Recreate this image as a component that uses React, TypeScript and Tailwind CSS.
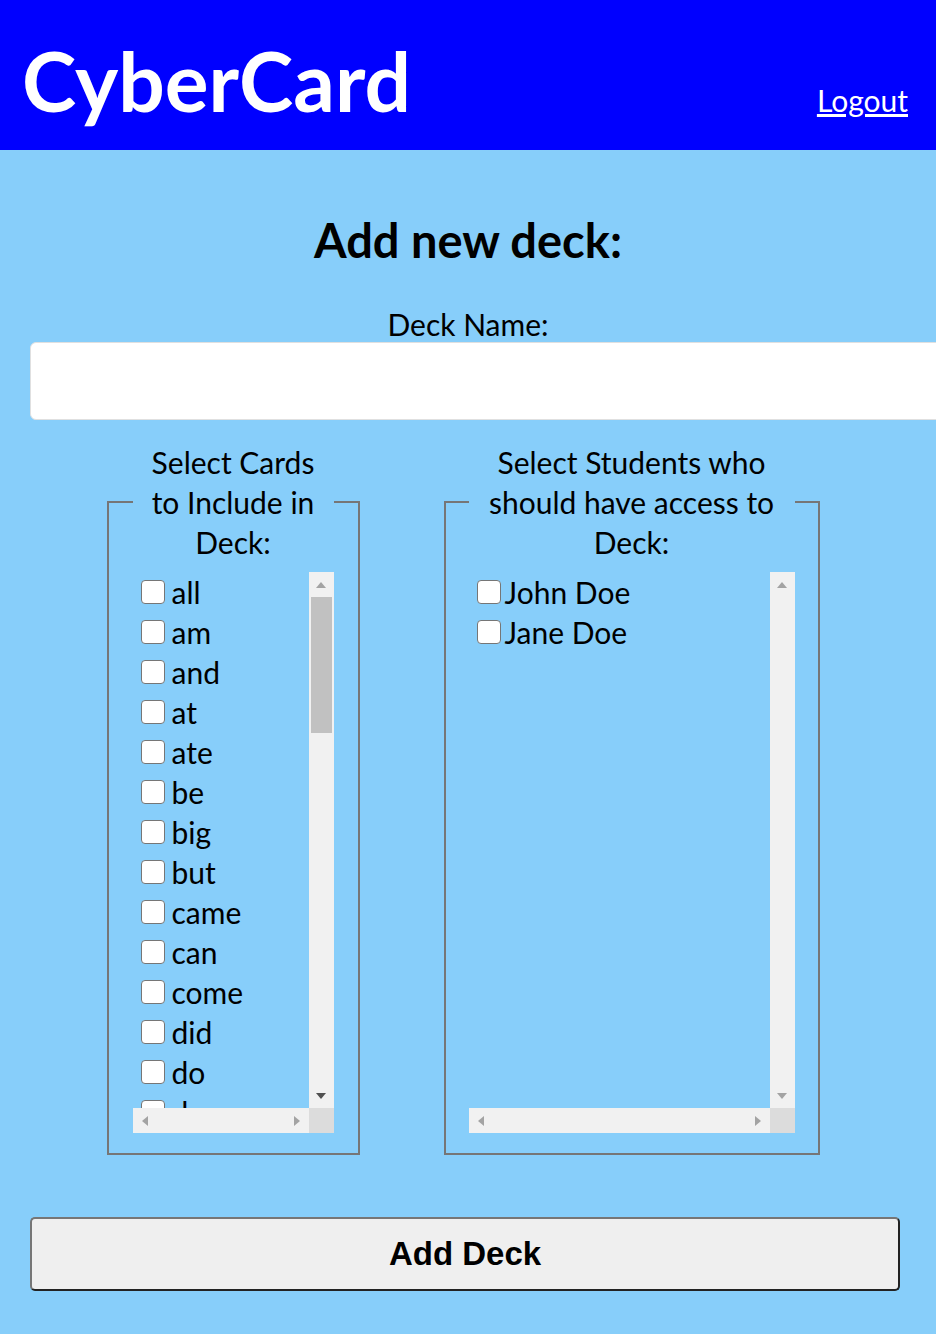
import React from "react";

const cards = [
  "all", "am", "and", "at", "ate", "be", "big", "but", "came", "can", "come", "did", "do", "down", "eat", "four", "get", "good",
];
const students = ["John Doe", "Jane Doe"];

const UpArrow = ({ color }: { color: string }) => (
  <svg width="10" height="6" viewBox="0 0 10 6">
    <polygon points="5,0 10,6 0,6" fill={color} />
  </svg>
);
const DownArrow = ({ color }: { color: string }) => (
  <svg width="10" height="6" viewBox="0 0 10 6">
    <polygon points="0,0 10,0 5,6" fill={color} />
  </svg>
);
const LeftArrow = () => (
  <svg width="6" height="10" viewBox="0 0 6 10">
    <polygon points="6,0 6,10 0,5" fill="#a3a3a3" />
  </svg>
);
const RightArrow = () => (
  <svg width="6" height="10" viewBox="0 0 6 10">
    <polygon points="0,0 6,5 0,10" fill="#a3a3a3" />
  </svg>
);

const CheckRow = ({ label, pad }: { label: string; pad: string }) => (
  <label className={`flex h-[40px] items-center ${pad}`}>
    <input
      type="checkbox"
      className="m-0 h-[24px] w-[24px] shrink-0 appearance-none rounded-[4px] border border-[#767676] bg-white"
    />
    <span className="whitespace-nowrap text-[30px] leading-[40px] text-black">{label}</span>
  </label>
);

const ScrollBox = ({
  items,
  scrollable,
  width,
  pad,
}: {
  items: string[];
  scrollable: boolean;
  width: string;
  pad: string;
}) => (
  <div className={`grid h-[561px] grid-cols-[1fr_25px] grid-rows-[1fr_25px] ${width}`}>
    <div className="overflow-hidden">
      {items.map((it) => (
        <CheckRow key={it} label={it} pad={pad} />
      ))}
    </div>
    <div className="flex flex-col bg-[#f1f1f1]">
      <div className="flex h-[25px] items-center justify-center">
        <UpArrow color="#a3a3a3" />
      </div>
      {scrollable && <div className="mx-[2px] h-[136px] bg-[#c1c1c1]" />}
      <div className="flex-1" />
      <div className="flex h-[25px] items-center justify-center">
        <DownArrow color={scrollable ? "#505050" : "#a3a3a3"} />
      </div>
    </div>
    <div className="flex items-center justify-between bg-[#f1f1f1] px-[9px]">
      <LeftArrow />
      <RightArrow />
    </div>
    <div className="bg-[#dcdcdc]" />
  </div>
);

export default function App() {
  return (
    <div className="min-h-screen overflow-hidden bg-[#87cefa] font-['Segoe_UI',Lato,'Noto_Sans',sans-serif] text-black">
      <header className="flex h-[150px] items-baseline justify-between bg-[#0000ff] pl-[22px] pr-[28px] pt-[39px]">
        <h1 className="text-[82px] font-bold leading-none text-white">CyberCard</h1>
        <a href="#" className="text-[30px] leading-none text-white underline">
          Logout
        </a>
      </header>

      <main className="flex flex-col items-center">
        <h2 className="mt-[60px] text-[47px] font-bold leading-[60px]">Add new deck:</h2>
        <label className="mt-[36px] text-[30px] leading-[36px]">Deck Name:</label>
        <div className="w-full pl-[30px]">
          <input
            type="text"
            className="h-[78px] w-[940px] rounded-[6px] border border-[#e0e0e0] bg-white outline-none"
          />
        </div>

        <div className="mt-[22px] flex gap-[84px] pr-[10px]">
          <fieldset className="m-0 border-2 border-[#767676] px-[24px] pb-[20px] pt-0">
            <legend className="mx-auto w-[201px] p-0 text-center text-[30px] leading-[40px]">
              <span className="mx-auto block w-[178px]">Select Cards to Include in Deck:</span>
            </legend>
            <div className="mt-[10px]">
              <ScrollBox items={cards} scrollable width="w-[201px]" pad="pl-[8px] gap-[7px]" />
            </div>
          </fieldset>
          <fieldset className="m-0 border-2 border-[#767676] px-[23px] pb-[20px] pt-0">
            <legend className="mx-auto w-[326px] p-0 text-center text-[30px] leading-[40px]">
              Select Students who should have access to Deck:
            </legend>
            <div className="mt-[10px]">
              <ScrollBox items={students} scrollable={false} width="w-[326px]" pad="pl-[8px] gap-[4px]" />
            </div>
          </fieldset>
        </div>

        <div className="w-full px-[30px] pr-[36px]">
          <button className="mt-[62px] flex h-[74px] w-full items-center justify-center rounded-[5px] border-2 border-b-[#222] border-l-[#767676] border-r-[#222] border-t-[#767676] bg-[#efefef] font-['Liberation_Sans',Arial,sans-serif] text-[33px] font-bold">
            Add Deck
          </button>
        </div>
      </main>
    </div>
  );
}
